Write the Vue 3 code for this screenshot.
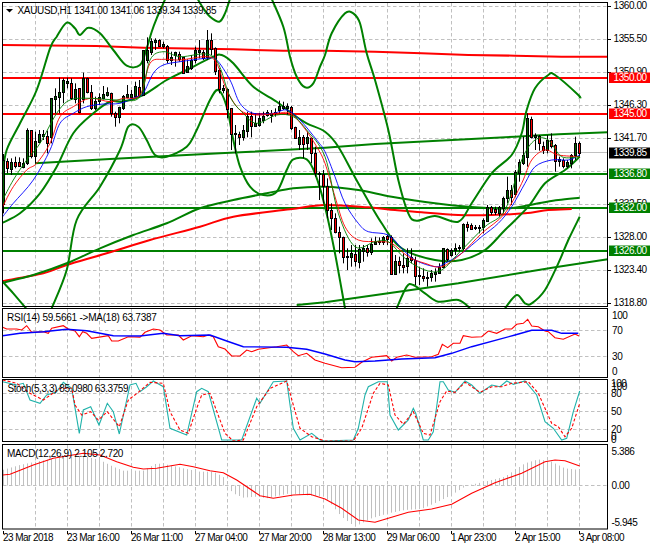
<script setup>
const A = (l) => l.map(([x, y]) => [x / 3, y / 3])
const B = (l) => l.map(([x, y]) => [325 + x / 3, y / 3])
const C = (l) => l.map(([x, y]) => [x / 3, 305 + y / 3])
const D = (l) => l.map(([x, y]) => [325 + x / 3, 305 + y / 3])
const poly = (p) => p.map(([x, y]) => `${x.toFixed(1)},${y.toFixed(1)}`).join(' ')
const curve = (p) => {
  let d = `M${p[0][0].toFixed(1)} ${p[0][1].toFixed(1)}`
  for (let i = 0; i < p.length - 1; i++) {
    const a = p[i - 1] || p[i], b = p[i], c = p[i + 1], e = p[i + 2] || c
    d += `C${(b[0] + (c[0] - a[0]) / 6).toFixed(1)} ${(b[1] + (c[1] - a[1]) / 6).toFixed(1)} ${(c[0] - (e[0] - b[0]) / 6).toFixed(1)} ${(c[1] - (e[1] - b[1]) / 6).toFixed(1)} ${c[0].toFixed(1)} ${c[1].toFixed(1)}`
  }
  return d
}

// high, body top, body bottom, low, bullish (3x px of the zoomed chart)
const raw = [
  [462,480,612,640,1],[475,484,505,520,0],[475,487,507,525,1],[470,487,497,505,0],[472,487,499,500,0],[475,490,500,505,1],
  [385,390,490,495,1],[390,390,468,475,0],[395,423,468,490,1],[390,402,425,430,1],[390,403,408,420,1],[392,407,430,460,0],
  [295,295,410,430,1],[265,288,297,340,1],[233,277,290,340,1],[235,240,277,310,1],[233,243,250,265,1],[235,250,295,300,0],
  [250,267,297,310,1],[265,265,335,340,0],[218,235,298,310,1],[233,233,275,280,0],[255,275,323,330,0],[290,303,325,330,1],
  [280,292,303,315,1],[258,283,295,298,1],[262,277,285,290,1],[278,278,340,350,0],[335,340,350,380,0],[320,322,350,370,1],
  [285,288,323,330,1],[255,281,290,295,1],[270,281,290,295,1],[245,258,288,290,1],[240,260,285,290,0],[150,150,285,287,1],
  [112,150,180,190,1],[115,122,155,165,1],[115,120,125,150,1],[118,120,137,140,0],[125,133,137,145,1],[135,137,180,190,0],
  [155,170,180,195,1],[155,157,165,200,1],[155,162,177,185,0],[170,172,218,222,0],[178,198,215,218,1],[165,180,205,210,1],
  [140,150,180,190,1],[120,150,157,175,1],[150,155,173,180,0],[90,120,172,180,1],[100,120,147,165,0],[142,145,212,225,0],
  [205,210,267,280,0],[255,265,270,280,1],[265,268,328,355,0],[325,325,402,450,0],[375,399,403,460,1],[395,403,410,435,0],
  [375,390,412,422,1],[335,348,392,412,1],[335,348,377,412,0],[340,370,378,380,1],[340,355,375,380,1],[335,348,360,370,1],
  [330,337,345,350,1],[330,338,345,368,1],[325,336,340,350,1],[302,318,330,340,1],[305,317,323,330,1],[310,318,323,345,1],
  [318,320,385,390,0],[380,382,413,415,0],[390,412,432,450,1],[405,412,432,475,0],[395,412,430,450,1],[412,415,458,490,0],
  [440,458,518,530,0],[515,518,521,600,1],[510,522,558,610,0],
  [535,558,630,655,0],[610,630,655,690,0],[640,655,695,700,0],[680,695,712,760,0],[710,712,770,790,0],[745,768,772,810,1],
  [735,760,772,800,1],[735,763,782,800,0],[735,748,785,805,1],[735,745,752,785,1],[735,745,755,770,0],[715,733,755,765,1],
  [710,725,733,735,1],[712,723,727,735,1],[708,712,725,735,1],[705,708,718,735,0],[706,712,822,825,0],[765,783,822,825,1],
  [770,783,795,820,0],[760,795,800,820,0],[745,775,797,820,1],[745,770,780,790,0],[770,780,827,855,0],[800,825,828,855,1],
  [805,827,833,845,0],[815,830,833,860,1],[810,820,832,845,1],[805,817,823,845,1],[790,800,818,822,1],[745,745,802,805,1],
  [745,748,777,785,0],[745,750,765,770,1],[730,743,750,765,1],[735,740,745,755,1],[670,672,745,750,1],[665,672,680,695,0],
  [670,675,688,690,0],[675,680,685,690,1],[675,682,685,700,0],[655,660,682,700,1],[615,622,662,665,1],[618,622,635,645,0],
  [620,628,635,645,0],[618,622,638,650,1],[590,593,625,640,1],[530,570,595,610,1],[555,570,592,615,0],[510,515,583,590,1],
  [478,487,518,545,1],[410,465,490,495,1],[340,355,472,500,1],[350,358,412,415,0],[400,405,410,450,1],[405,407,430,452,0],
  [425,437,450,462,0],[405,420,450,460,1],[400,420,438,445,0],[432,435,482,515,0],[470,478,482,500,1],[475,480,498,505,0],
  [480,487,497,505,1],[462,465,490,505,1],[410,430,465,480,1],[425,430,458,470,0],
]
const candles = raw.map(([h, t, b, l, up], i) => ({
  x: 3.5 + 4 * i, h: h / 3, t: Math.round(t / 3) + 0.5, b: Math.round(b / 3) + 0.5, l: l / 3, up,
}))

const vGrid = Array.from({ length: 19 }, (_, k) => 3.5 + 32 * k).filter((x) => x > 4)
const mainGrid = [6, 39, 72, 105, 138, 171, 204, 237, 270, 303].map((y) => y + 0.5)

const upper1 = curve([...A([[8,522],[20,450],[60,370],[110,270],[150,145],[170,110],[200,68],[225,85],[240,105],[265,83],[300,100],[340,150],[380,197],[420,195],[440,145],[455,95],[470,55],[490,10],[505,-25]])])
const upper2 = curve(A([[590,-8],[610,25],[630,50],[658,65],[675,40],[692,-10]]))
const upper3 = curve([...A([[812,-10],[850,80],[870,170],[890,230],[915,262],[940,250],[960,200]]), ...B([[0,165],[20,100],[60,40],[85,40],[105,70],[125,160],[150,240],[190,390],[220,540],[250,640],[275,662],[330,648],[400,665],[440,610],[500,520],[560,465],[590,400],[605,330],[630,265],[670,225],[690,225],[760,285],[764,295]])])
const middle = curve([...A([[8,668],[60,640],[120,580],[170,500],[220,400],[280,340],[330,305],[370,305],[430,285],[500,240],[560,210],[640,170],[665,165],[700,190],[760,260],[830,305],[875,340],[920,370]]), ...B([[0,395],[40,440],[100,550],[170,670],[230,745],[330,780],[410,780],[480,750],[540,690],[610,620],[660,550],[720,510],[764,470]])])
const lower1 = curve(A([[8,845],[40,880],[78,925]]))
const lower2 = curve([...A([[155,925],[200,810],[230,660],[300,560],[360,450],[385,380],[415,380],[440,420],[465,465],[500,470],[560,440],[590,390],[630,300],[655,270],[680,320],[700,420],[720,500],[750,560],[790,585],[830,575],[860,510],[880,478],[920,478],[945,520]]), ...B([[0,620],[30,760],[60,925]])])
const lower3 = curve(B([[215,925],[245,860],[265,855],[300,880],[340,905],[400,900],[435,925]]))
const lower4 = curve(B([[540,925],[575,885],[600,910],[620,910],[660,870],[700,790],[730,720],[764,650]]))
const thickLines = [upper1, upper2, upper3, middle, lower1, lower2, lower3, lower4]

const maGreen = curve([...A([[8,848],[100,825],[200,790],[300,745],[400,705],[500,670],[600,625],[700,600],[800,580],[880,565]]), ...B([[0,560],[100,570],[200,590],[330,610],[430,620],[550,625],[640,610],[700,600],[764,593]])])
const maRed = curve([...A([[8,843],[130,820],[200,795],[320,760],[450,720],[600,680],[700,650],[870,628]]), ...B([[0,615],[130,622],[210,630],[290,637],[400,645],[500,645],[600,640],[670,630],[740,627]])])
const thinBlue = curve([...A([[8,650],[40,610],[100,540],[150,450],[180,370],[220,340],[260,320],[310,312],[360,310],[410,290],[430,280],[460,220],[490,195],[540,185],[620,175],[650,180],[690,240],[720,310],[760,340],[820,340],[860,330],[900,360],[950,420]]), ...B([[0,455],[30,530],[60,610],[100,670],[130,695],[190,705],[230,745],[270,780],[330,800],[360,790],[410,760],[470,710],[520,670],[560,620],[600,550],[630,500],[680,480],[730,480],[764,465]])])
const thinRed = curve([...A([[8,620],[40,560],[80,510],[110,490],[150,430],[180,350],[220,320],[270,295],[330,305],[370,295],[420,285],[450,190],[490,178],[540,180],[620,170],[650,190],[680,270],[720,330],[770,345],[830,340],[870,340],[910,380],[950,440]]), ...B([[0,490],[30,590],[60,680],[100,720],[160,725],[200,730],[250,770],[300,790],[350,800],[410,760],[470,700],[540,640],[590,550],[620,480],[660,450],[700,465],[764,470]])])
const thinGreen = curve([...A([[8,600],[40,540],[80,480],[120,430],[170,340],[210,300],[270,295],[360,300],[420,290],[450,180],[490,155],[540,170],[640,170],[690,290],[730,340],[770,370],[830,345],[880,350],[920,390]]), ...B([[0,470],[40,640],[90,740],[150,725],[190,725],[240,775],[300,810],[350,810],[410,750],[480,680],[540,630],[590,480],[630,420],[670,420],[710,470],[764,470]])])

const resistance = poly([...A([[8,135],[290,138],[430,143],[700,148],[850,152]]), ...B([[0,152],[150,155],[290,160],[430,165],[570,167],[710,170],[848,170]])])
const trendTop = poly([...A([[105,490],[330,477],[660,460]]), ...B([[0,443],[150,432],[570,410],[700,403],[848,397]])])
const trendLow = poly([...A([[890,915]]), ...B([[0,907],[200,878],[400,850],[700,800],[848,778]])])

const levels = [
  { y: 78, color: '#ff0000', label: '1350.00' },
  { y: 114, color: '#ff0000', label: '1345.00' },
  { y: 174, color: '#008000', label: '1336.80' },
  { y: 208, color: '#008000', label: '1332.00' },
  { y: 251, color: '#008000', label: '1326.00' },
]
const priceTicks = [
  [6, '1360.00'], [39, '1355.50'], [72, '1350.90'], [105, '1346.30'], [138, '1341.70'],
  [204, '1332.50'], [237, '1328.00'], [270, '1323.40'], [303, '1318.80'],
]
const timeLabels = ['23 Mar 2018', '23 Mar 16:00', '26 Mar 11:00', '27 Mar 04:00', '27 Mar 20:00', '28 Mar 13:00', '29 Mar 06:00', '1 Apr 23:00', '2 Apr 15:00', '3 Apr 08:00']

const rsiRed = poly([...C([[8,67],[20,72],[50,72],[65,75],[80,62],[95,82],[130,80],[145,85],[155,70],[190,62],[205,72],[225,78],[238,95],[248,80],[260,85],[275,100],[325,92],[335,108],[355,108],[385,95],[420,97],[435,82],[460,72],[480,75],[500,90],[535,90],[550,105],[575,92],[610,95],[625,90],[640,95],[655,125],[675,132],[695,153],[720,153],[740,135],[755,140],[775,133],[830,125],[860,120],[880,140],[895,152],[920,145],[945,165]]), ...D([[0,175],[50,188],[90,187],[110,172],[140,157],[185,152],[200,168],[215,157],[245,150],[270,157],[320,155],[340,148],[352,118],[368,128],[385,115],[405,115],[415,92],[440,97],[470,95],[490,78],[515,85],[540,72],[560,72],[575,58],[595,55],[608,43],[620,63],[640,65],[660,78],[670,80],[690,98],[715,103],[750,87],[762,93]])])
const rsiBlue = poly([...C([[8,92],[60,85],[130,80],[200,73],[260,77],[340,92],[420,93],[490,85],[540,92],[630,90],[680,108],[730,125],[860,127],[920,133]]), ...D([[0,147],[60,165],[90,170],[150,168],[230,162],[330,158],[380,145],[440,125],[570,90],[620,76],[680,76],[710,85],[760,85]])])
const stochTeal = poly([...C([[8,230],[50,240],[70,235],[90,285],[120,295],[140,270],[170,260],[190,232],[215,250],[238,385],[250,315],[272,305],[297,360],[322,295],[340,320],[358,387],[390,240],[408,235],[420,260],[440,245],[460,228],[490,245],[510,370],[560,390],[590,260],[605,250],[625,260],[665,405],[725,405],[770,280],[780,295],[820,230],[860,228],[880,370],[900,405],[935,385],[960,405]]), ...D([[0,408],[85,405],[100,370],[120,270],[130,245],[160,230],[187,230],[195,330],[220,375],[250,345],[265,310],[272,325],[295,405],[310,405],[325,380],[345,230],[355,230],[370,255],[390,262],[420,228],[440,240],[465,265],[500,240],[525,245],[545,228],[565,238],[600,228],[635,270],[660,350],[685,370],[710,405],[725,400],[745,320],[764,258]])])
const stochRed = poly([...C([[8,225],[50,235],[90,265],[130,285],[180,250],[215,250],[225,300],[245,330],[272,320],[295,345],[322,320],[358,365],[385,285],[415,262],[450,232],[490,235],[510,320],[540,375],[565,385],[590,310],[605,270],[630,265],[675,385],[700,408],[730,405],[770,305],[810,250],[860,228],[880,300],[900,370],[935,395]]), ...D([[0,408],[85,408],[110,370],[145,265],[165,235],[190,240],[210,330],[235,358],[265,320],[295,385],[315,390],[345,290],[365,258],[390,262],[420,232],[465,262],[500,245],[530,245],[560,235],[610,230],[640,265],[680,355],[700,365],[720,395],[740,370],[764,295]])])
const macdLine = poly([...C([[8,510],[30,508],[100,480],[160,460],[250,445],[300,450],[350,470],[400,487],[430,492],[470,490],[540,478],[580,485],[630,497],[670,503],[710,525],[780,572],[820,580],[880,570],[930,568]]), ...D([[0,582],[50,610],[100,645],[150,652],[190,640],[250,622],[320,612],[380,598],[440,565],[510,533],[590,505],[660,470],[690,465],[720,467],[764,483]])])

const histKeys = [...C([[8,495],[60,480],[107,470],[155,462],[200,455],[250,453],[300,465],[340,485],[370,497],[430,497],[470,475],[510,480],[550,490],[600,500],[640,500],[670,515],[680,541],[700,565],[730,578],[770,575],[800,580],[870,565],[910,570]]), ...D([[0,575],[50,635],[90,665],[140,640],[190,625],[240,615],[290,612],[340,590],[380,570],[420,545],[430,541],[480,530],[540,515],[600,475],[640,463],[680,470],[720,490],[764,495]])]
const histAt = (x) => {
  for (let i = 0; i < histKeys.length - 1; i++) {
    const [x0, y0] = histKeys[i], [x1, y1] = histKeys[i + 1]
    if (x >= x0 && x <= x1) return y0 + ((y1 - y0) * (x - x0)) / (x1 - x0)
  }
  return 485
}
const hist = Array.from({ length: 145 }, (_, i) => ({ x: 3.5 + 4 * i, y: histAt(3.5 + 4 * i) }))
</script>

<template>
  <div class="terminal">
    <!-- main window -->
    <svg class="pane" width="650" height="308" viewBox="0 0 650 308">
      <g class="grid">
        <line v-for="y in mainGrid" :key="y" x1="3" x2="607" :y1="y" :y2="y" />
        <line v-for="x in vGrid" :key="x" :x1="x" :x2="x" y1="3" y2="306" />
      </g>
      <line class="price-line" x1="3" x2="607" y1="152.5" y2="152.5" />
      <polyline class="thick red" :points="resistance" />
      <line class="thick red" x1="3" x2="607" y1="78" y2="78" />
      <line class="thick red" x1="3" x2="607" y1="114" y2="114" />
      <line class="thick green" x1="3" x2="607" y1="174" y2="174" />
      <line class="thick green" x1="3" x2="607" y1="208" y2="208" />
      <line class="thick green" x1="3" x2="607" y1="251" y2="251" />
      <polyline class="thick green" :points="trendTop" />
      <polyline class="thick green" :points="trendLow" />
      <path class="thick red" :d="maRed" />
      <path class="thick green" :d="maGreen" />
      <path v-for="(d, i) in thickLines" :key="i" class="thick green" :d="d" />
      <g v-for="c in candles" :key="c.x">
        <line class="wick" :x1="c.x" :x2="c.x" :y1="c.h" :y2="c.l" />
        <rect class="body" :class="c.up ? 'bull' : 'bear'" :x="c.x - 1" :y="c.t" width="2" :height="Math.max(c.b - c.t, 1)" />
      </g>
      <path class="thin blue" :d="thinBlue" />
      <path class="thin red-thin" :d="thinRed" />
      <path class="thin green-thin" :d="thinGreen" />

      <path d="M6 9 h7 l-3.5 3.5z" fill="#000" />
      <text class="t hdr" x="17.5" y="14">XAUUSD,H1   1341.00 1341.06 1339.34 1339.85</text>

      <rect class="frame" x="2.5" y="2.5" width="605" height="304" />
      <g v-for="p in priceTicks" :key="p[1]">
        <line class="tick" x1="608" x2="611" :y1="p[0] + 0.5" :y2="p[0] + 0.5" />
        <text class="t" x="613.5" :y="p[0] + 3">{{ p[1] }}</text>
      </g>
      <g v-for="l in levels" :key="l.label">
        <rect x="609" :y="l.y - 5.5" width="41" height="10.5" :fill="l.color" />
        <text class="t white" x="613.5" :y="l.y + 3">{{ l.label }}</text>
      </g>
      <rect x="609" y="147.5" width="41" height="11" fill="#000" />
      <text class="t white" x="613.5" y="155.5">1339.85</text>
    </svg>

    <!-- RSI -->
    <svg class="pane" width="650" height="71" viewBox="0 308 650 71">
      <g class="grid">
        <line x1="3" x2="607" y1="330.5" y2="330.5" />
        <line x1="3" x2="607" y1="356.5" y2="356.5" />
        <line v-for="x in vGrid" :key="x" :x1="x" :x2="x" y1="309" y2="377" />
      </g>
      <polyline class="line sig-red" :points="rsiRed" />
      <polyline class="line sig-blue" :points="rsiBlue" />
      <text class="t rsi" x="7" y="321">RSI(14) 59.5661  -&gt;MA(18) 63.7387</text>
      <rect class="frame" x="2.5" y="308.5" width="605" height="69" />
      <text class="t" x="612" y="318.5">100</text>
      <text class="t" x="612" y="334">70</text>
      <text class="t" x="612" y="360">30</text>
      <text class="t" x="612" y="374.5">0</text>
    </svg>

    <!-- Stochastic -->
    <svg class="pane stoch" width="650" height="64" viewBox="0 379 650 64">
      <g class="grid">
        <line x1="3" x2="607" y1="393.5" y2="393.5" />
        <line x1="3" x2="607" y1="411.5" y2="411.5" />
        <line x1="3" x2="607" y1="429.5" y2="429.5" />
        <line v-for="x in vGrid" :key="x" :x1="x" :x2="x" y1="380" y2="441" />
      </g>
      <polyline class="line sig-teal" :points="stochTeal" />
      <polyline class="line sig-red dashed" :points="stochRed" />
      <text class="t" x="7.5" y="391.5">Stoch(5,3,3) 85.0980 63.3759</text>
      <rect class="frame" x="2.5" y="379.5" width="605" height="62" />
      <text class="t" x="611" y="387">100</text>
      <text class="t" x="611.5" y="390">100</text>
      <text class="t" x="611" y="397">80</text>
      <text class="t" x="611" y="415">50</text>
      <text class="t" x="611" y="433">20</text>
      <text class="t" x="611" y="439.5">0</text>
      <text class="t" x="611" y="442.5">0</text>
    </svg>

    <!-- MACD -->
    <svg class="pane" width="650" height="87" viewBox="0 443 650 87">
      <g class="grid">
        <line x1="3" x2="607" y1="485.5" y2="485.5" />
        <line v-for="x in vGrid" :key="x" :x1="x" :x2="x" y1="445" y2="529" />
      </g>
      <line v-for="h in hist" :key="h.x" class="hist" :x1="h.x" :x2="h.x" y1="485.5" :y2="h.y" />
      <polyline class="line sig-red" :points="macdLine" />
      <text class="t macd" x="7" y="456.5">MACD(12,26,9) 2.105 2.720</text>
      <rect class="frame" x="2.5" y="444.5" width="605" height="84.5" />
      <text class="t" x="611.5" y="455">5.386</text>
      <text class="t" x="611.5" y="489">0.00</text>
      <text class="t" x="611.5" y="526">-5.945</text>
    </svg>

    <!-- time axis -->
    <div class="time-axis">
      <span v-for="t in timeLabels" :key="t" class="time-label">{{ t }}</span>
    </div>
  </div>
</template>

<style scoped>
.terminal {
  width: 650px;
  height: 550px;
  background: #fff;
  display: flex;
  flex-direction: column;
  overflow: hidden;
  font-family: "Liberation Sans", Arial, sans-serif;
}
.pane {
  display: block;
  flex: none;
}
.stoch {
  overflow: visible;
}
.grid line {
  stroke: #c0c0c0;
  stroke-width: 1;
  stroke-dasharray: 3.5 2.5;
}
.price-line {
  stroke: #c0c0c0;
  stroke-width: 1;
}
.thick {
  fill: none;
  stroke-width: 2;
}
.thick.red {
  stroke: #ff0000;
}
.thick.green {
  stroke: #008000;
}
.wick {
  stroke: #000;
  stroke-width: 1;
}
.body {
  stroke: #000;
  stroke-width: 1;
}
.bull {
  fill: #006400;
}
.bear {
  fill: #ff0000;
}
.thin {
  fill: none;
  stroke-width: 0.9;
}
.blue {
  stroke: #0000ff;
}
.red-thin {
  stroke: #ff0000;
}
.green-thin {
  stroke: #008000;
}
.line {
  fill: none;
  stroke-width: 1.1;
}
.sig-red {
  stroke: #ff0000;
}
.sig-blue {
  stroke: #0000ff;
  stroke-width: 1.4;
}
.sig-teal {
  stroke: #20b2aa;
}
.dashed {
  stroke-dasharray: 3 2;
}
.hist {
  stroke: #c0c0c0;
  stroke-width: 1;
}
.frame {
  fill: none;
  stroke: #000;
  stroke-width: 1;
}
.tick {
  stroke: #000;
  stroke-width: 1;
}
.t {
  font-size: 10px;
  letter-spacing: -0.42px;
  white-space: pre;
  fill: #000;
  font-family: "Liberation Sans", Arial, sans-serif;
}
.hdr {
  letter-spacing: -0.35px;
}
.rsi {
  letter-spacing: -0.23px;
}
.macd {
  letter-spacing: -0.36px;
}
.white {
  fill: #fff;
}
.time-axis {
  display: flex;
  padding-left: 3px;
  height: 20px;
  font-size: 10px;
  letter-spacing: -0.55px;
  color: #000;
  line-height: 12px;
  padding-top: 2px;
  box-sizing: border-box;
}
.time-label {
  flex: none;
  width: 64px;
  white-space: nowrap;
  position: relative;
}
.time-label::before {
  content: "";
  position: absolute;
  left: 0;
  top: -1px;
  width: 1px;
  height: 3px;
  background: #000;
}
</style>
